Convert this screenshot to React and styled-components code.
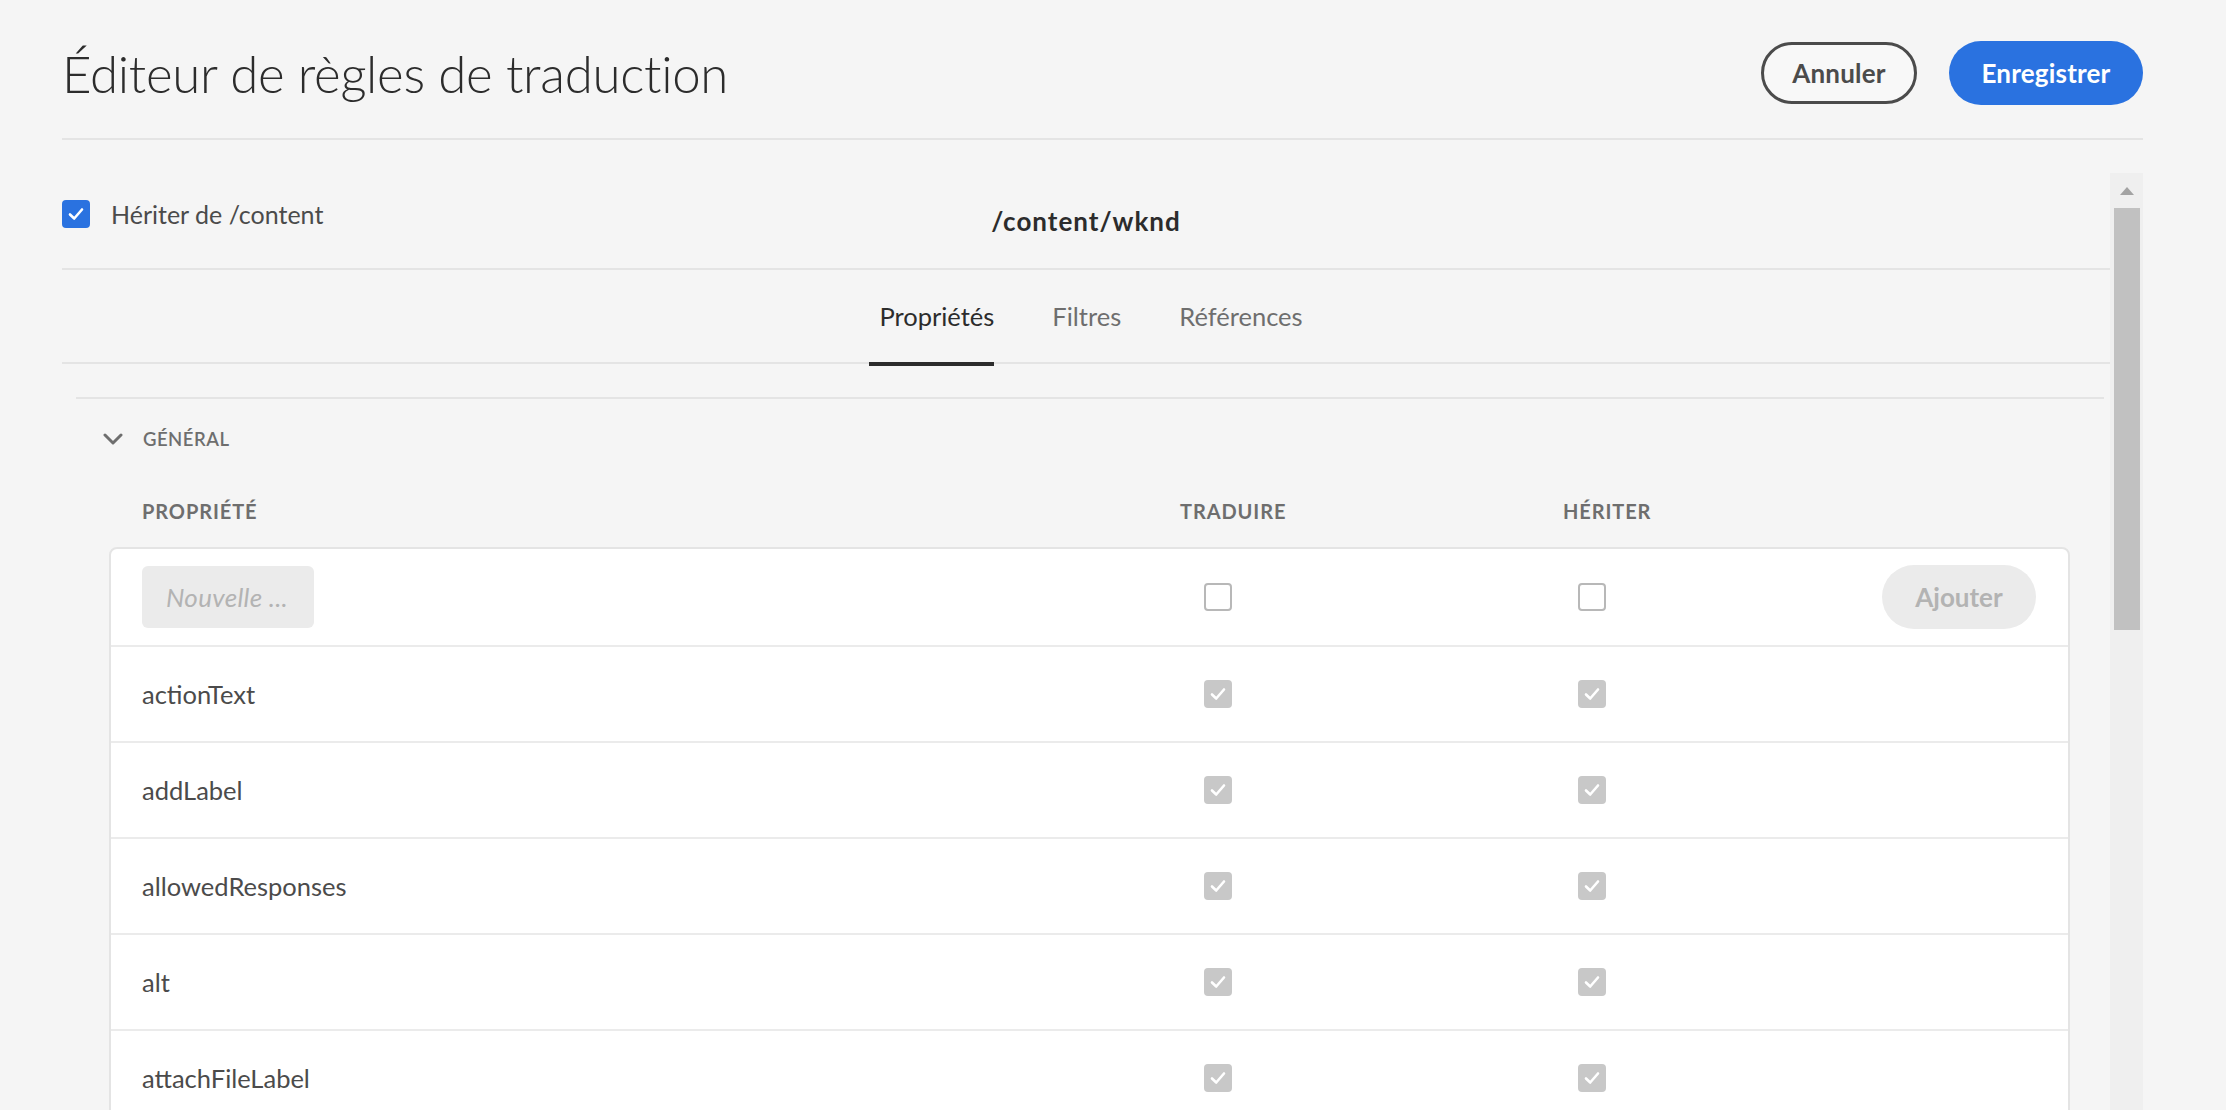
import React from 'react'
import styled, { createGlobalStyle } from 'styled-components'

const GlobalStyle = createGlobalStyle`
  html, body {
    margin: 0;
    padding: 0;
    background: #f5f5f5;
    font-family: Lato, "Open Sans", "Liberation Sans", sans-serif;
    color: #4b4b4b;
    overflow: hidden;
  }
  * {
    box-sizing: border-box;
  }
`

const Page = styled.div`
  height: 100vh;
  display: flex;
  flex-direction: column;
  padding: 0 83px 0 62px;
`

const Header = styled.header`
  height: 140px;
  flex-shrink: 0;
  display: flex;
  align-items: center;
  justify-content: space-between;
  padding-top: 8px;
  border-bottom: 2px solid #e4e4e4;
`

const Title = styled.h1`
  margin: 0;
  font-size: 51px;
  font-weight: 300;
  color: #2c2c2c;
  letter-spacing: -0.3px;
`

const Actions = styled.div`
  display: flex;
  align-items: center;
  gap: 32px;
`

const Button = styled.button`
  font-family: inherit;
  font-size: 26px;
  font-weight: 700;
  letter-spacing: 0.2px;
  border-radius: 40px;
  cursor: pointer;
  height: ${(p) => (p.$primary ? '64px' : '62px')};
  min-width: ${(p) => (p.$primary ? '194px' : '156px')};
  padding: 0 24px;
  border: ${(p) => (p.$primary ? 'none' : '3px solid #4b4b4b')};
  background: ${(p) => (p.$primary ? '#2a72e0' : '#f8f8f8')};
  color: ${(p) => (p.$primary ? '#ffffff' : '#4b4b4b')};
`

const Body = styled.div`
  flex: 1;
  min-height: 0;
  display: flex;
  margin-top: 33px;
`

const Scroller = styled.div`
  flex: 1;
  min-width: 0;
  overflow: hidden;
`

const InheritBar = styled.div`
  height: 97px;
  display: grid;
  grid-template-columns: 1fr auto 1fr;
  align-items: center;
  border-bottom: 2px solid #e4e4e4;
`

const InheritLabel = styled.label`
  display: flex;
  align-items: center;
  gap: 21px;
  font-size: 25px;
  color: #4b4b4b;
  margin-bottom: 14px;
`

const Path = styled.div`
  font-size: 26px;
  font-weight: 700;
  letter-spacing: 1px;
  color: #2c2c2c;
`

const Box = styled.span`
  width: 28px;
  height: 28px;
  flex-shrink: 0;
  display: inline-flex;
  align-items: center;
  justify-content: center;
  border-radius: 4px;
  margin-left: ${(p) => p.$offset || 0}px;
  background: ${(p) =>
    p.$variant === 'blue' ? '#2a72e0' : p.$variant === 'disabled' ? '#c8c8c8' : '#ffffff'};
  border: ${(p) => (p.$variant === 'empty' ? '2px solid #b8b8b8' : 'none')};
`

const TabList = styled.div`
  display: flex;
  justify-content: center;
  gap: 48px;
  height: 94px;
  border-bottom: 2px solid #e4e4e4;
`

const Tab = styled.div`
  height: 96px;
  display: flex;
  align-items: center;
  padding: 0 0 0 10px;
  font-size: 25.5px;
  color: ${(p) => (p.$active ? '#2c2c2c' : '#6e6e6e')};
  border-bottom: 4px solid ${(p) => (p.$active ? '#2c2c2c' : 'transparent')};
`

const Section = styled.section`
  margin: 33px 6px 0 14px;
  border-top: 2px solid #e4e4e4;
`

const SectionHead = styled.div`
  height: 80px;
  display: flex;
  align-items: center;
  gap: 20px;
  padding-left: 27px;
  font-size: 18.5px;
  font-weight: 600;
  letter-spacing: 0.5px;
  color: #6e6e6e;
`

const rowColumns = '1038px 383px 1fr auto'

const ColumnHeads = styled.div`
  height: 68px;
  display: grid;
  grid-template-columns: ${rowColumns};
  align-items: center;
  margin: 0 34px 0 33px;
  padding: 0 34px 5px 33px;
`

const HeadCell = styled.div`
  font-size: 20px;
  font-weight: 700;
  letter-spacing: 0.9px;
  color: #6e6e6e;
  text-transform: uppercase;
`

const Card = styled.div`
  margin: 0 34px 0 33px;
  background: #ffffff;
  border: 2px solid #e4e4e4;
  border-radius: 8px;
`

const Row = styled.div`
  display: grid;
  grid-template-columns: ${rowColumns};
  align-items: center;
  min-height: ${(p) => (p.$add ? '98px' : '96px')};
  padding: 0 32px 0 31px;
  border-bottom: 2px solid #ebebeb;
  font-size: 25.5px;
  color: #4b4b4b;
`

const NewInput = styled.input`
  width: 172px;
  height: 62px;
  border: none;
  border-radius: 6px;
  background: #ebebeb;
  padding: 0 0 0 24px;
  font-family: inherit;
  font-size: 26px;
  font-style: italic;
  letter-spacing: 0.3px;
  outline: none;
  &::placeholder {
    color: #b3b3b3;
  }
`

const AddButton = styled.button`
  width: 154px;
  height: 64px;
  border: none;
  border-radius: 32px;
  background: #ebebeb;
  color: #b3b3b3;
  font-family: inherit;
  font-size: 26px;
  font-weight: 700;
`

const Scrollbar = styled.div`
  width: 33px;
  flex-shrink: 0;
  background: #efefef;
  display: flex;
  flex-direction: column;
  align-items: center;
`

const ScrollArrow = styled.div`
  height: 35px;
  display: flex;
  align-items: center;
  justify-content: center;
`

const Thumb = styled.div`
  width: 26px;
  height: 422px;
  margin-left: 1px;
  background: #c1c1c1;
`

const Check = () => (
  <svg width="18" height="18" viewBox="0 0 18 18">
    <path d="M3 9.5 L7.2 13.5 L15 4.5" fill="none" stroke="#ffffff" strokeWidth="2.6" strokeLinecap="round" strokeLinejoin="round" />
  </svg>
)

const Checkbox = ({ variant, offset }) => (
  <Box $variant={variant} $offset={offset}>
    {variant !== 'empty' && <Check />}
  </Box>
)

const Chevron = () => (
  <svg width="20" height="12" viewBox="0 0 20 12">
    <polyline points="2,2 10,10 18,2" fill="none" stroke="#6e6e6e" strokeWidth="3" strokeLinecap="round" strokeLinejoin="round" />
  </svg>
)

const properties = ['actionText', 'addLabel', 'allowedResponses', 'alt', 'attachFileLabel']

export default function App() {
  return (
    <>
      <GlobalStyle />
      <Page>
        <Header>
          <Title>Éditeur de règles de traduction</Title>
          <Actions>
            <Button>Annuler</Button>
            <Button $primary>Enregistrer</Button>
          </Actions>
        </Header>
        <Body>
          <Scroller>
            <InheritBar>
              <InheritLabel>
                <Checkbox variant="blue" />
                Hériter de /content
              </InheritLabel>
              <Path>/content/wknd</Path>
              <div />
            </InheritBar>
            <TabList>
              <Tab $active>Propriétés</Tab>
              <Tab>Filtres</Tab>
              <Tab>Références</Tab>
            </TabList>
            <Section>
              <SectionHead>
                <Chevron />
                GÉNÉRAL
              </SectionHead>
              <ColumnHeads>
                <HeadCell>Propriété</HeadCell>
                <HeadCell>Traduire</HeadCell>
                <HeadCell>Hériter</HeadCell>
                <div />
              </ColumnHeads>
              <Card>
                <Row $add>
                  <div>
                    <NewInput placeholder="Nouvelle ..." />
                  </div>
                  <Checkbox variant="empty" offset={24} />
                  <Checkbox variant="empty" offset={15} />
                  <AddButton>Ajouter</AddButton>
                </Row>
                {properties.map((name) => (
                  <Row key={name}>
                    <div>{name}</div>
                    <Checkbox variant="disabled" offset={24} />
                    <Checkbox variant="disabled" offset={15} />
                    <div />
                  </Row>
                ))}
              </Card>
            </Section>
          </Scroller>
          <Scrollbar>
            <ScrollArrow>
              <svg width="14" height="8" viewBox="0 0 14 8">
                <polygon points="0,8 7,0 14,8" fill="#a3a3a3" />
              </svg>
            </ScrollArrow>
            <Thumb />
          </Scrollbar>
        </Body>
      </Page>
    </>
  )
}
